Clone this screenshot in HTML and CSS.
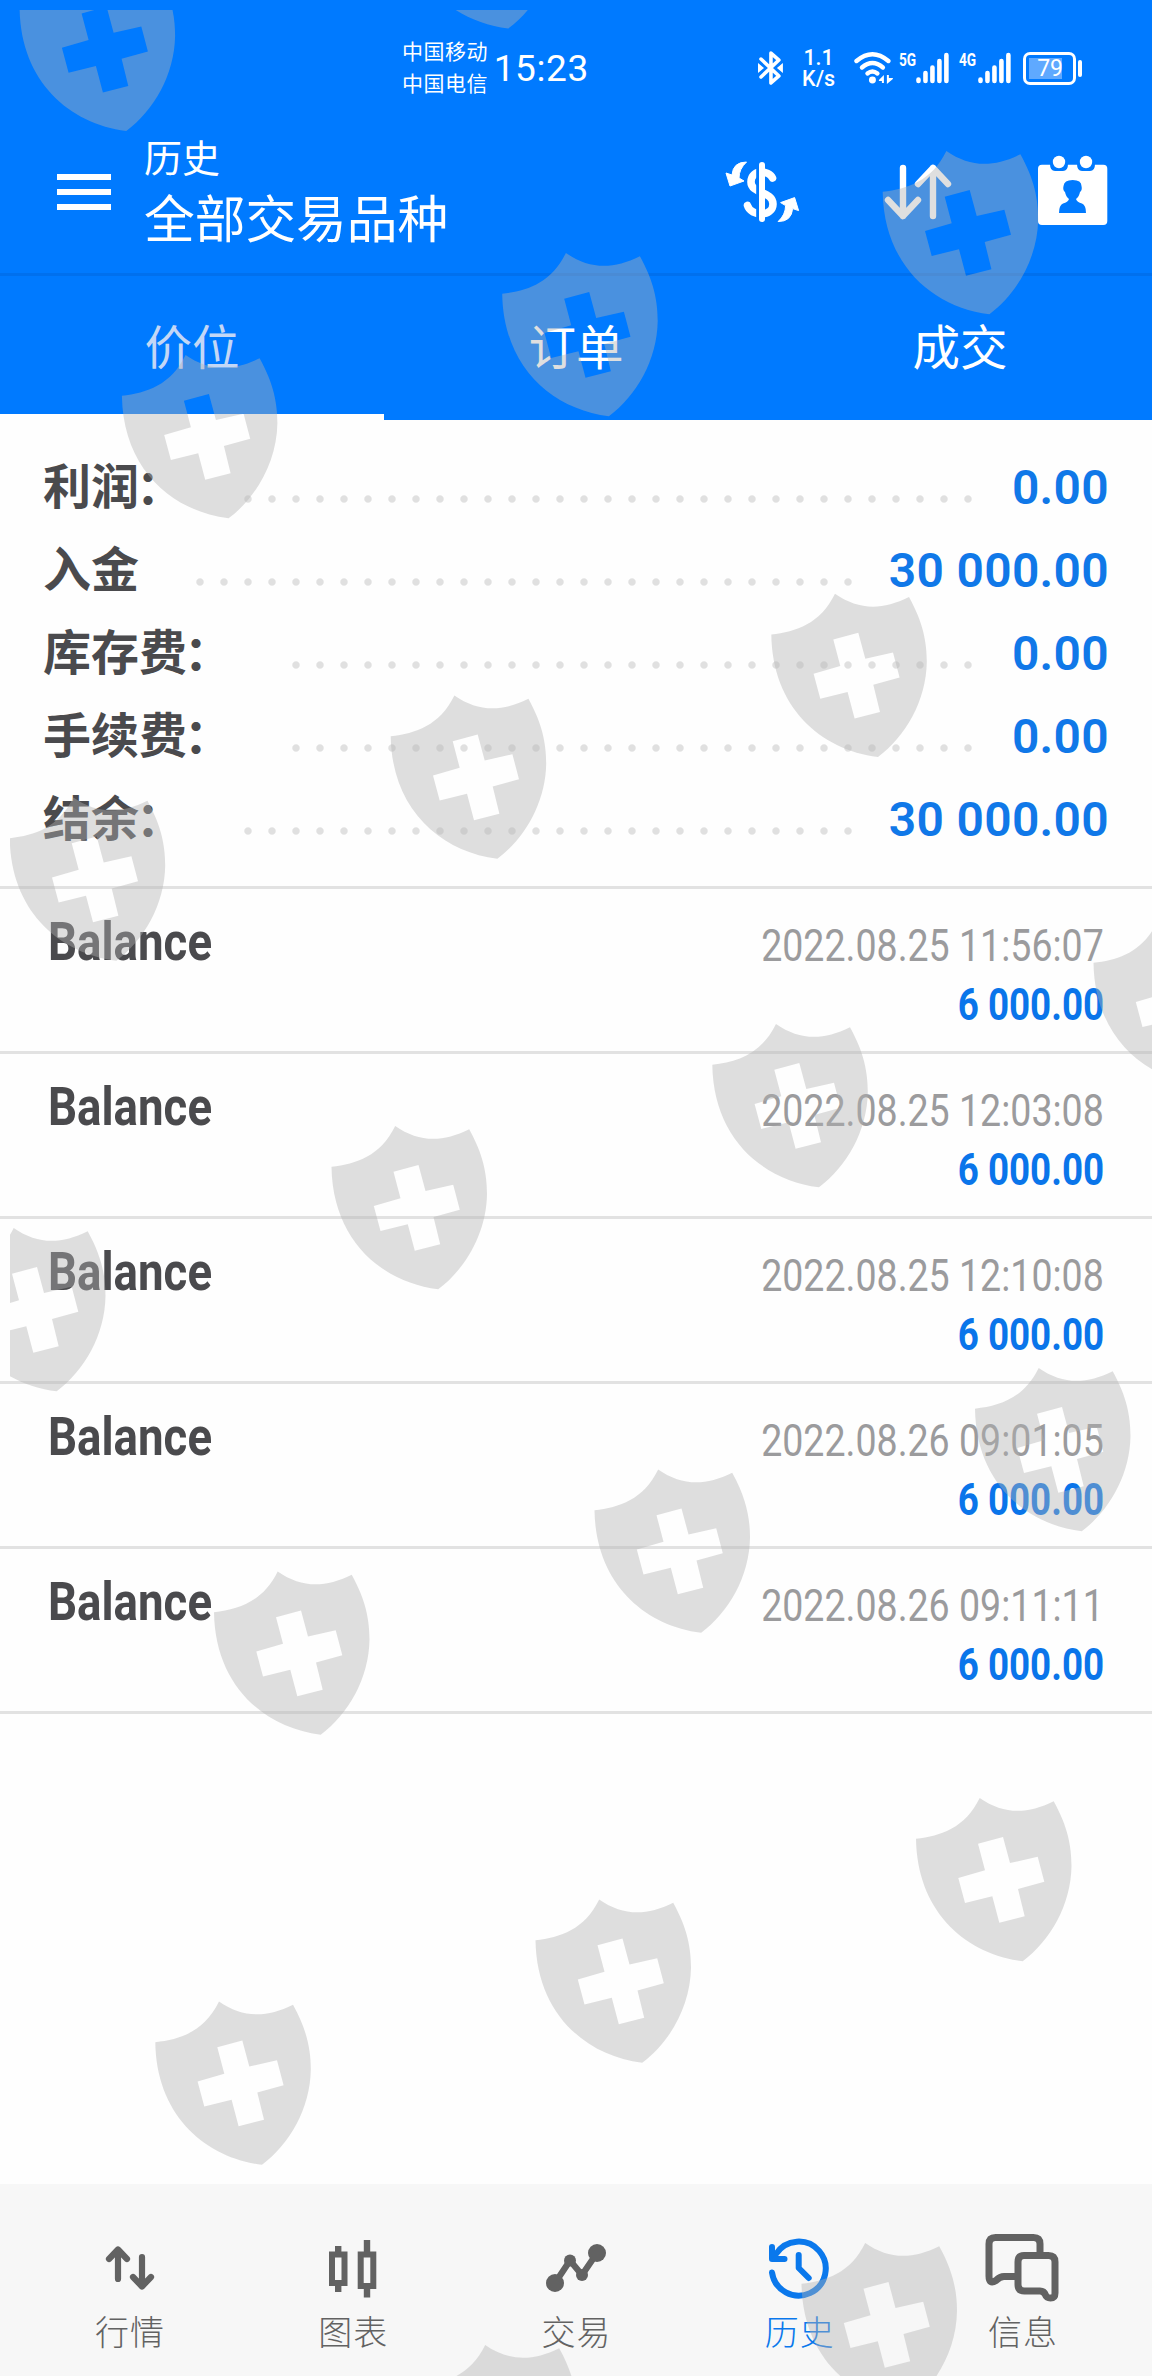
FILE: index.html
```html
<!DOCTYPE html>
<html lang="zh-CN">
<head>
    <meta charset="UTF-8">
    <meta name="viewport" content="width=device-width, initial-scale=1.0">
    <title>历史</title>
    <link rel="stylesheet" href="styles.css">
</head>
<body>

    <div class="app">
        <header class="header">
            <div class="status-bar">
                <div class="carriers">
                    <span>中国移动</span>
                    <span>中国电信</span>
                </div>
                <span class="clock">15:23</span>
                <svg class="bluetooth" width="26" height="36" viewBox="0 0 26 36">
                    <path d="M3 9 L21 26 L13 33 V3 L21 10 L3 27" fill="none" stroke="#fff" stroke-width="3.600" stroke-linejoin="round" stroke-linecap="round"/>
                    <path d="M0 13 L6 18 L0 23Z M25 13 L19 18 L25 23Z" fill="#fff"/>
                </svg>
                <div class="speed">
                    <span>1.1</span>
                    <span>K/s</span>
                </div>
                <svg class="wifi" width="40" height="34" viewBox="0 0 40 34">
                    <g fill="none" stroke="#fff" stroke-width="4.400" stroke-linecap="round">
                        <path d="M2.500 10 Q18.500 -3.500 34.500 10"/>
                        <path d="M8 16.500 Q18.500 7.500 29 16.500"/>
                        <path d="M13.500 22.500 Q18.500 18.500 23.500 22.500"/>
                    </g>
                    <circle cx="18.500" cy="29" r="3.500" fill="#fff"/>
                    <path d="M25 29 L30 24 V32 H28 V30 H25Z M39 28 L33 33 V24 H35 V27 H39Z" fill="#fff"/>
                </svg>
                <span class="net">5G</span>
                <svg class="signal" width="34" height="32" viewBox="0 0 34 32">
                    <path d="M2.500 27.500 V29 M9.500 21 V29 M16.500 15.500 V29 M23.500 9 V29 M30.500 3 V29" stroke="#fff" stroke-width="4.600" stroke-linecap="round"/>
                </svg>
                <span class="net net-4g">4G</span>
                <svg class="signal" width="34" height="32" viewBox="0 0 34 32">
                    <path d="M2.500 27.500 V29 M9.500 21 V29 M16.500 15.500 V29 M23.500 9 V29 M30.500 3 V29" stroke="#fff" stroke-width="4.600" stroke-linecap="round"/>
                </svg>
                <div class="battery"><span>79</span></div>
                <div class="battery-tip"></div>
            </div>

            <div class="toolbar">
                <div class="menu"><i></i><i></i><i></i></div>
                <div class="titles">
                    <div class="subtitle">历史</div>
                    <div class="title">全部交易品种</div>
                </div>
                <svg class="icon-currency" width="84" height="84" viewBox="0 0 84 84">
                    <path id="turn" d="M26.500 12 Q13 12 12 25 L6 23 L10 36 L24 31 L19 28 Q19 19 26.500 12Z" fill="#fff" stroke="#fff" stroke-linejoin="round"/>
                    <use href="#turn" transform="rotate(180 42.300 41.800)"/>
                    <path d="M52.500 28 C49 20 31 19 31 32 C31 44 53 41 53 54 C53 67 31 67 27.500 55.500" fill="none" stroke="#fff" stroke-width="7.600" stroke-linecap="round"/>
                    <path d="M37.700 14 V70" stroke="#007aff" stroke-width="3"/>
                    <path d="M42 15 V69" stroke="#fff" stroke-width="6" stroke-linecap="round"/>
                </svg>
                <svg class="icon-sort" width="76" height="76" viewBox="0 0 76 76">
                    <path d="M23 13 V61 M8 45 L23 61 L38 45 M53 61 V13 M38 29 L53 13 L68 29" fill="none" stroke="#fff" stroke-width="6.400" stroke-linecap="round" stroke-linejoin="round"/>
                </svg>
                <svg class="icon-calendar" width="78" height="80" viewBox="0 0 78 80">
                    <rect x="4" y="14.700" width="69.300" height="60.300" rx="4" fill="#fff"/>
                    <path d="M16 14 Q16 21 21 21 H29 Q34 21 34 14Z M43 14 Q43 21 48 21 H56 Q61 21 61 14Z" fill="#007aff"/>
                    <circle cx="25" cy="12" r="6.200" fill="#fff"/>
                    <circle cx="52" cy="12" r="6.200" fill="#fff"/>
                    <path d="M29.500 36 Q30 30 38.700 30 Q47.500 30 47.500 36 Q48.500 40 46 42 Q45 47 42 49 Q43 52 48 53.500 Q52 55 52 63 H25 Q25 55 29 53.500 Q34 52 35 49 Q32 47 31 42 Q28.500 40 29.500 36Z" fill="#007aff"/>
                </svg>
            </div>

            <nav class="tabs">
                <a class="tab active">价位</a>
                <a class="tab">订单</a>
                <a class="tab">成交</a>
            </nav>
        </header>

        <section class="summary">
            <div class="sum-row"><span>利润<em>：</em></span><i class="leader"></i><b>0.00</b></div>
            <div class="sum-row"><span>入金</span><i class="leader"></i><b>30 000.00</b></div>
            <div class="sum-row"><span>库存费<em>：</em></span><i class="leader"></i><b>0.00</b></div>
            <div class="sum-row"><span>手续费<em>：</em></span><i class="leader"></i><b>0.00</b></div>
            <div class="sum-row"><span>结余<em>：</em></span><i class="leader"></i><b>30 000.00</b></div>
        </section>

        <section class="deals">
            <div class="deal">
                <div class="deal-name">Balance</div>
                <div class="deal-info"><span class="date">2022.08.25 11:56:07</span><b>6 000.00</b></div>
            </div>
            <div class="deal">
                <div class="deal-name">Balance</div>
                <div class="deal-info"><span class="date">2022.08.25 12:03:08</span><b>6 000.00</b></div>
            </div>
            <div class="deal">
                <div class="deal-name">Balance</div>
                <div class="deal-info"><span class="date">2022.08.25 12:10:08</span><b>6 000.00</b></div>
            </div>
            <div class="deal">
                <div class="deal-name">Balance</div>
                <div class="deal-info"><span class="date">2022.08.26 09:01:05</span><b>6 000.00</b></div>
            </div>
            <div class="deal">
                <div class="deal-name">Balance</div>
                <div class="deal-info"><span class="date">2022.08.26 09:11:11</span><b>6 000.00</b></div>
            </div>
        </section>

        <nav class="bottom-nav">
            <a class="nav-item">
                <svg width="80" height="80" viewBox="0 0 80 80">
                    <path d="M28 51 V22 M19 31 L28 21.500 L37 31 M52 29 V58 M43 49 L52 58.500 L61 49" fill="none" stroke="currentColor" stroke-width="6.200" stroke-linecap="round" stroke-linejoin="round"/>
                </svg>
                <span>行情</span>
            </a>
            <a class="nav-item">
                <svg width="80" height="80" viewBox="0 0 80 80">
                    <path d="M19 26.500 H31.500 V55 H19Z M47.700 26.500 H60.300 V58 H47.700Z" fill="none" stroke="currentColor" stroke-width="6"/>
                    <path d="M25.200 18 V25 M25.200 57 V64 M54 12 V25 M54 60 V69.500" stroke="currentColor" stroke-width="6.400"/>
                </svg>
                <span>图表</span>
            </a>
            <a class="nav-item">
                <svg width="80" height="80" viewBox="0 0 80 80">
                    <path d="M19 55 L34 32.500 L46 47 L61 25" fill="none" stroke="currentColor" stroke-width="6.400"/>
                    <g fill="currentColor">
                        <circle cx="19" cy="55" r="9"/>
                        <circle cx="34" cy="32.500" r="6"/>
                        <circle cx="46" cy="47" r="6"/>
                        <circle cx="61" cy="25" r="9"/>
                    </g>
                </svg>
                <span>交易</span>
            </a>
            <a class="nav-item current">
                <svg width="80" height="80" viewBox="0 0 80 80">
                    <path d="M13 44.500 A27 27 0 1 0 17 26" fill="none" stroke="currentColor" stroke-width="6" stroke-linecap="round"/>
                    <path d="M13 19 V31 H25.500 M39.700 27 V40 L49.700 50" fill="none" stroke="currentColor" stroke-width="6" stroke-linecap="round" stroke-linejoin="round"/>
                    <path d="M13 31 L19 23 V31Z" fill="currentColor"/>
                </svg>
                <span>历史</span>
            </a>
            <a class="nav-item">
                <svg width="80" height="80" viewBox="0 0 80 80">
                    <g fill="none" stroke="currentColor" stroke-width="7" stroke-linejoin="round">
                        <path d="M58 24 V16 Q58 9.500 51.500 9.500 H13.500 Q7 9.500 7 16 V48 Q7 57 14 52.500 Q18 48.500 22 48.500 H34"/>
                        <path d="M42 27.500 H66.500 Q73 27.500 73 34 V65 Q73 70 68.500 70 Q64.500 70 63.500 67 Q62 63 58 63 H42.500 Q36 63 36 56.500 V34 Q36 27.500 42 27.500Z"/>
                    </g>
                </svg>
                <span>信息</span>
            </a>
        </nav>

        <!-- watermark pattern over the whole screen -->
        <svg class="watermark" width="1152" height="2376" viewBox="0 0 1152 2376">
            <defs>
                <clipPath id="area"><rect x="10" y="10" width="1142" height="2366"/></clipPath>
                <path id="shield" fill-rule="evenodd" d="M0 40.700 C25 38 49 30 63.700 0 C87 16 110 17 137.700 3.300 C152 29 155.500 49 155.500 68 C155 107 134 143 106.700 163.300 C49 156 1 113 0 40.700Z M62 45.700 L87 39 L94 65 L121.700 58.700 L128.300 83.700 L102 91 L108.700 118.300 L83.300 124.700 L76.300 98.300 L49 105 L42.300 80 L69 72.300Z"/>
            </defs>
            <g clip-path="url(#area)">
                <use href="#shield" x="19.600" y="-32.300"/>
                <use href="#shield" x="401.500" y="-134.700"/>
                <use href="#shield" x="121.900" y="355"/>
                <use href="#shield" x="502.200" y="253"/>
                <use href="#shield" x="882.700" y="151"/>
                <use href="#shield" x="9.700" y="797.500"/>
                <use href="#shield" x="390.700" y="695.500"/>
                <use href="#shield" x="771.300" y="593.800"/>
                <use href="#shield" x="-50" y="1228"/>
                <use href="#shield" x="331.500" y="1126"/>
                <use href="#shield" x="712.300" y="1024"/>
                <use href="#shield" x="1093.500" y="922"/>
                <use href="#shield" x="214" y="1571.500"/>
                <use href="#shield" x="594.500" y="1469.500"/>
                <use href="#shield" x="975" y="1368"/>
                <use href="#shield" x="155.300" y="2001.500"/>
                <use href="#shield" x="535.500" y="1899.500"/>
                <use href="#shield" x="916" y="1798"/>
                <use href="#shield" x="421.500" y="2345"/>
                <use href="#shield" x="801.500" y="2243"/>
            </g>
        </svg>
    </div>

</body>
</html>
```
FILE: styles.css
```css
* {
    box-sizing: border-box;
}

body {
    margin: 0;
    background: #fff;
    font-family: Roboto, "Noto Sans CJK SC", sans-serif;
}

.app {
    position: relative;
    width: 1152px;
    height: 2376px;
    overflow: hidden;
    display: flex;
    flex-direction: column;
    background: #fefefe;
}

/* header */
.header {
    height: 420px;
    background: #007aff;
    color: #fff;
}

.status-bar {
    height: 136px;
    padding: 0 70px 0 402px;
    display: flex;
    align-items: center;
}

.carriers {
    width: 92px;
    display: flex;
    flex-direction: column;
    font-size: 21px;
    line-height: 32px;
    letter-spacing: 0.5px;
}

.clock {
    width: 265px;
    font-size: 37px;
    letter-spacing: 0.6px;
    line-height: 1;
}

.speed {
    width: 36px;
    margin: 0 17px 0 17px;
    display: flex;
    flex-direction: column;
    align-items: center;
    font-size: 21.5px;
    font-weight: 500;
    line-height: 21px;
}

.net {
    width: 16px;
    margin: 0 1px 18px 6px;
    font-size: 19px;
    font-weight: 700;
    line-height: 1;
    transform: scaleX(0.72);
    transform-origin: left;
}

.net-4g {
    width: 18px;
    margin-left: 9px;
}

.battery {
    width: 53px;
    height: 33px;
    margin-left: 11px;
    padding: 3px;
    border: 3px solid #fff;
    border-radius: 7px;
}

.battery span {
    display: block;
    width: 33px;
    height: 21px;
    padding-left: 8px;
    background: #5fa9ff;
    font-size: 23px;
    line-height: 21px;
}

.battery-tip {
    width: 4px;
    height: 17px;
    margin-left: 2px;
    border-radius: 2px;
    background: #fff;
}

.toolbar {
    height: 140px;
    padding: 0 40px 0 57px;
    display: flex;
    align-items: flex-start;
    border-bottom: 3px solid #0070ee;
}

.menu {
    width: 54px;
    margin: 38px 33px 0 0;
    display: flex;
    flex-direction: column;
    gap: 9px;
}

.menu i {
    height: 6px;
    background: #fff;
}

.titles {
    width: 576px;
}

.subtitle {
    font-size: 38px;
    line-height: 46px;
}

.title {
    font-size: 50.7px;
    line-height: 78px;
}

.icon-currency {
    margin-top: 14px;
}

.icon-sort {
    margin: 19px 0 0 76px;
}

.icon-calendar {
    margin: 14px 0 0 78px;
}

.tabs {
    height: 144px;
    display: flex;
}

.tab {
    flex: 1;
    padding-top: 8px;
    border-bottom: 6px solid transparent;
    font-size: 47.5px;
    line-height: 130px;
    text-align: center;
}

.tab.active {
    color: #c3d7f6;
    border-bottom-color: #fff;
}

/* totals */
.summary {
    height: 469px;
    padding: 25px 43px 0 43px;
    border-bottom: 3px solid #e2e2e2;
}

.sum-row {
    height: 83px;
    display: flex;
    align-items: center;
    font-size: 48px;
    font-weight: 700;
}

.sum-row span {
    margin-top: -7px;
    color: #4a4a4d;
}

.sum-row em {
    margin: 0 3px 0 -3px;
    font-style: normal;
}

.sum-row b {
    margin-top: 2px;
    font-weight: 600;
    letter-spacing: 0.3px;
    color: #1078e8;
}

.leader {
    flex: 1;
    height: 8px;
    margin: 25px 27px 0 49px;
    background: radial-gradient(circle, #e0e0e0 3.2px, transparent 4.2px) repeat-x;
    background-size: 24px 8px;
}

/* history list */
.deals {
    flex: 1;
}

.deal {
    height: 165px;
    padding: 23px 48px 0 48px;
    display: flex;
    justify-content: space-between;
    border-bottom: 3px solid #e2e2e2;
}

.deal-name {
    font-size: 54px;
    font-weight: 700;
    line-height: 60px;
    color: #4a4a4d;
    transform: scaleX(0.845);
    transform-origin: left;
}

.deal-info {
    display: flex;
    flex-direction: column;
    align-items: flex-end;
    font-size: 45px;
    line-height: 59px;
    white-space: nowrap;
    transform: scaleX(0.834);
    transform-origin: right;
}

.date {
    padding-top: 4px;
    color: #9b9b9d;
}

.deal-info b {
    color: #0a75ea;
    transform: scaleX(0.98);
    transform-origin: right;
}

/* bottom navigation */
.bottom-nav {
    height: 192px;
    padding: 44px 18px 0;
    display: flex;
    background: #f7f7f7;
    color: #626262;
}

.nav-item {
    flex: 1;
    display: flex;
    flex-direction: column;
    align-items: center;
}

.nav-item span {
    margin-top: 5px;
    padding-left: 1px;
    font-size: 34px;
    font-weight: 300;
    line-height: 40px;
    letter-spacing: 1px;
}

.nav-item.current {
    color: #0a78ec;
}

.watermark {
    position: absolute;
    left: 0;
    top: 0;
    fill: rgba(178, 178, 178, 0.416);
    pointer-events: none;
}
```
